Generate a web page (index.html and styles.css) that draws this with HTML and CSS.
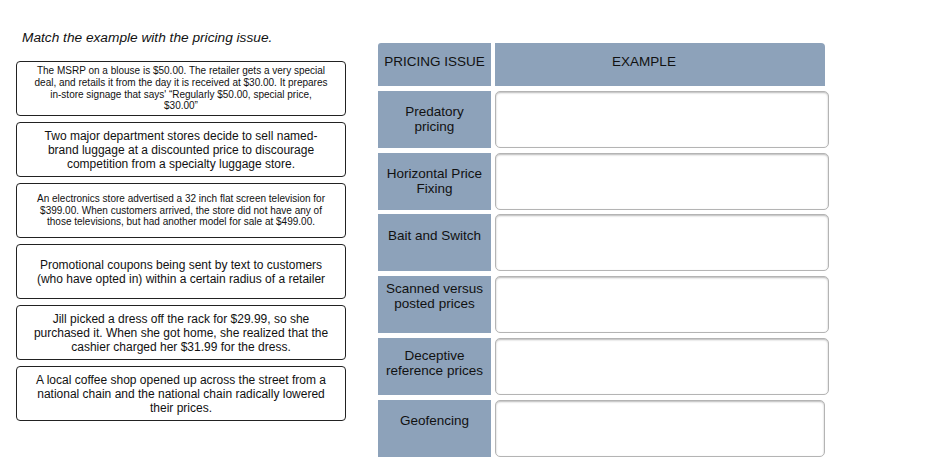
FILE: index.html
```html
<!DOCTYPE html>
<html>
<head>
<meta charset="utf-8">
<link rel="stylesheet" href="styles.css">
</head>
<body>
<div class="page">
  <div class="left">
    <p class="title">Match the example with the pricing issue.</p>
    <div class="cards">
      <div class="card card--small">The MSRP on a blouse is $50.00. The retailer gets a very special<br>deal, and retails it from the day it is received at $30.00. It prepares<br>in-store signage that says' “Regularly $50.00, special price,<br>$30.00”</div>
      <div class="card">Two major department stores decide to sell named-<br>brand luggage at a discounted price to discourage<br>competition from a specialty luggage store.</div>
      <div class="card card--small">An electronics store advertised a 32 inch flat screen television for<br>$399.00. When customers arrived, the store did not have any of<br>those televisions, but had another model for sale at $499.00.</div>
      <div class="card">Promotional coupons being sent by text to customers<br>(who have opted in) within a certain radius of a retailer</div>
      <div class="card">Jill picked a dress off the rack for $29.99, so she<br>purchased it. When she got home, she realized that the<br>cashier charged her $31.99 for the dress.</div>
      <div class="card">A local coffee shop opened up across the street from a<br>national chain and the national chain radically lowered<br>their prices.</div>
    </div>
  </div>
  <div class="board">
    <div class="head head--issue">PRICING ISSUE</div>
    <div class="head head--example">EXAMPLE</div>

    <div class="label">Predatory<br>pricing</div>
    <div class="drop"></div>

    <div class="label">Horizontal Price<br>Fixing</div>
    <div class="drop"></div>

    <div class="label label--bait">Bait and Switch</div>
    <div class="drop"></div>

    <div class="label label--high">Scanned versus<br>posted prices</div>
    <div class="drop"></div>

    <div class="label label--mid">Deceptive<br>reference prices</div>
    <div class="drop"></div>

    <div class="label">Geofencing</div>
    <div class="drop drop--last"></div>
  </div>
</div>
</body>
</html>
```

FILE: styles.css
```css
html, body {
  margin: 0;
  padding: 0;
  background: #ffffff;
}

body {
  font-family: "Liberation Sans", Arial, Helvetica, sans-serif;
  color: #111111;
}

.page {
  display: flex;
  align-items: flex-start;
  padding-left: 16px;
}

.left {
  width: 330px;
  padding-top: 30px;
}

.title {
  margin: 0 0 15px 6px;
  font-style: italic;
  font-size: 13.7px;
  line-height: 16px;
  color: #111111;
}

.cards {
  display: flex;
  flex-direction: column;
  gap: 6px;
}

.card {
  box-sizing: border-box;
  height: 55px;
  border: 1px solid #222222;
  border-radius: 4px;
  display: flex;
  align-items: center;
  justify-content: center;
  text-align: center;
  padding: 0 8px;
  font-size: 12px;
  line-height: 14px;
  white-space: nowrap;
}

.card--small {
  font-size: 10px;
  line-height: 11.7px;
}

.board {
  margin-left: 32px;
  margin-top: 43px;
  display: grid;
  grid-template-columns: 113px 334px;
  grid-template-rows: 43px repeat(6, 57px);
  column-gap: 4px;
  row-gap: 4.8px;
}

.head {
  background: #8da2ba;
  font-size: 13.5px;
  line-height: 15px;
  padding-top: 11px;
  box-sizing: border-box;
  text-align: center;
  color: #111111;
}

.head--issue {
  border-top-left-radius: 3px;
}

.head--example {
  width: 330px;
  padding-right: 32px;
  border-top-right-radius: 4px;
}

.label {
  background: #8da2ba;
  font-size: 13.5px;
  line-height: 15px;
  text-align: center;
  padding-top: 13px;
  box-sizing: border-box;
  white-space: nowrap;
}

.label--bait {
  padding-top: 14px;
}

.label--high {
  padding-top: 5px;
}

.label--mid {
  padding-top: 10px;
}

.drop {
  box-sizing: border-box;
  background: #ffffff;
  border: 1px solid #b4b4b4;
  border-radius: 5px;
  box-shadow: inset 0 1px 2px rgba(0, 0, 0, 0.28);
}

.drop--last {
  width: 330px;
}
```
